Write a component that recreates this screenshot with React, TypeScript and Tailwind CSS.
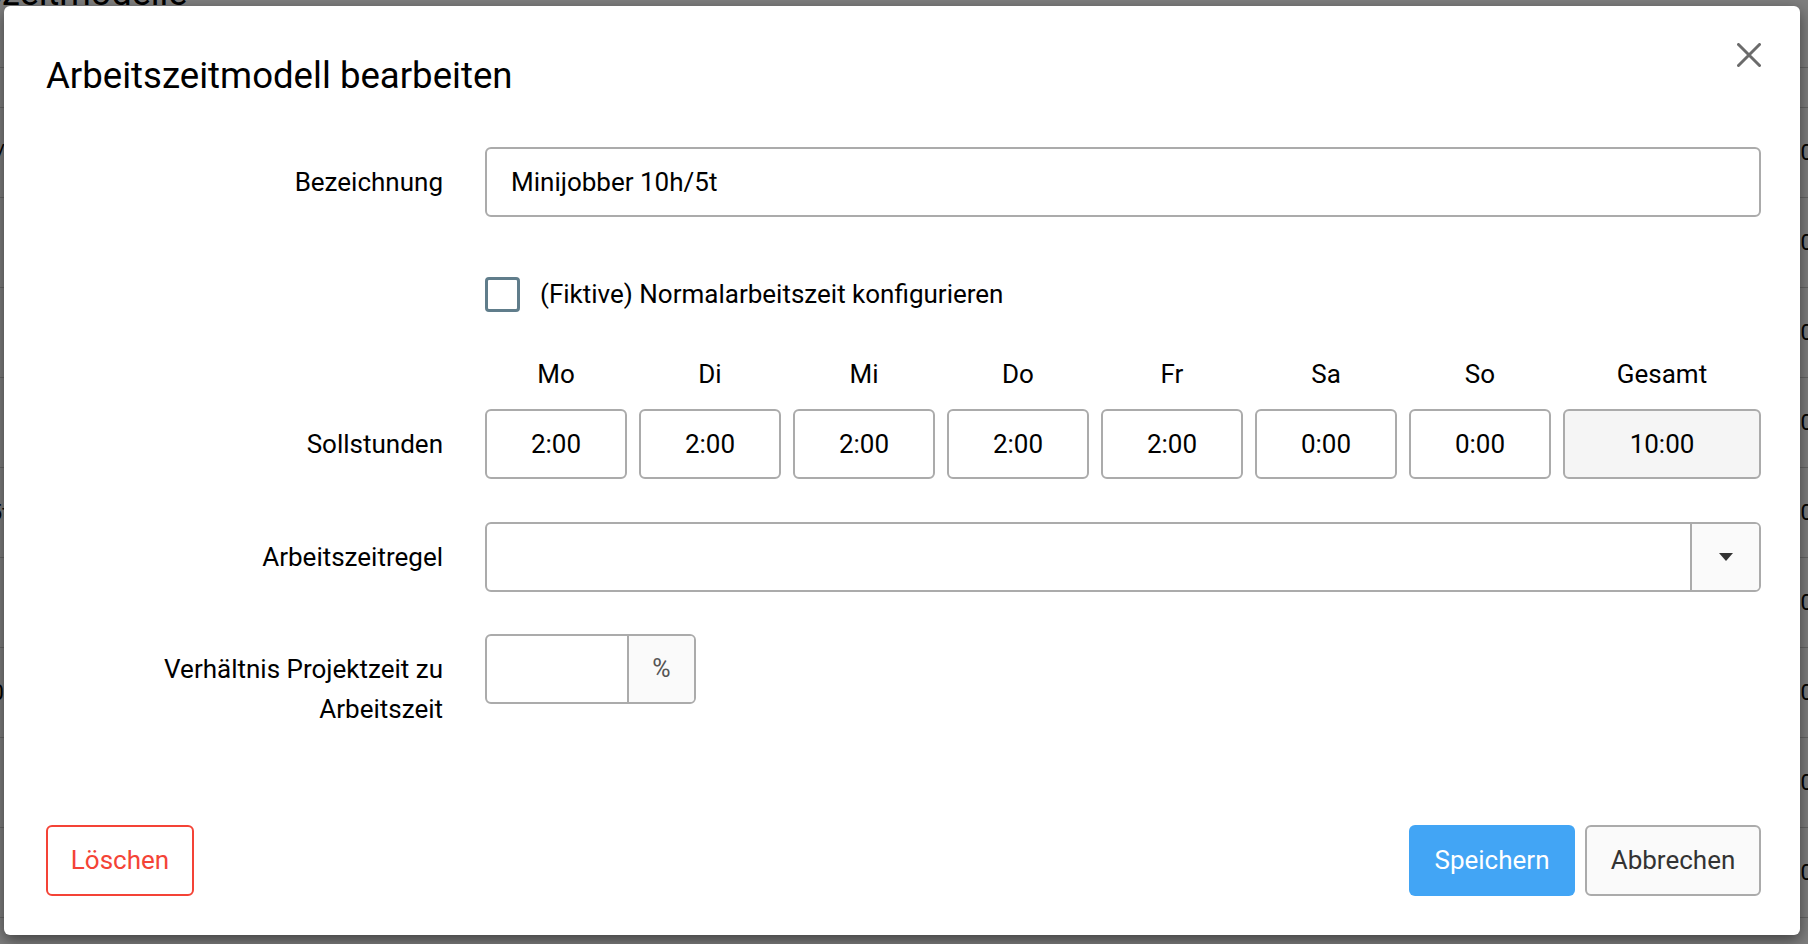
import React from 'react';

type Day = { label: string; value: string };

const days: Day[] = [
  { label: 'Mo', value: '2:00' },
  { label: 'Di', value: '2:00' },
  { label: 'Mi', value: '2:00' },
  { label: 'Do', value: '2:00' },
  { label: 'Fr', value: '2:00' },
  { label: 'Sa', value: '0:00' },
  { label: 'So', value: '0:00' },
];

// rows of the list page that sits behind the dialog
const pageRows = ['Minijobber 10h/5t', 'Vollzeit 40h/5t', 'Teilzeit 20h/5t', 'Teilzeit 30h/4t', 'Vollzeit 38,5h/5t', 'Teilzeit 25h/5t', 'Werkstudent 20h', 'Teilzeit 32h/4t', 'Aushilfe 8h/2t'];

const boxCls = 'h-[70px] w-full rounded-[6px] border-2 border-[#ababab] text-[26px] text-black outline-none';

const Row: React.FC<{ label?: React.ReactNode; className?: string; labelClassName?: string; children: React.ReactNode }> = ({
  label,
  className = '',
  labelClassName = '',
  children,
}) => (
  <div className={`grid grid-cols-[397px_1fr] gap-x-[42px] ${className}`}>
    <div className={`text-right text-[26px] leading-[39px] text-black ${labelClassName}`}>{label}</div>
    <div>{children}</div>
  </div>
);

const BackgroundPage: React.FC = () => (
  <div className="absolute inset-0 overflow-hidden bg-white">
    <h1 className="-ml-[112px] -mt-[29px] text-[36px] leading-[44px] text-black">Arbeitszeitmodelle</h1>
    <div className="mt-[52px] border-t border-[#cfcfcf]">
      <div className="flex h-[40px] items-center border-b border-[#cfcfcf] text-[20px] font-bold">
        <span className="-ml-[60px]">Name</span>
      </div>
      {pageRows.map((r) => (
        <div key={r} className="flex h-[90px] items-center border-b border-[#cfcfcf] text-[22px] text-black">
          <span className="-ml-[150px]">{r}</span>
          <span className="-mr-[35px] ml-auto">10:00</span>
        </div>
      ))}
    </div>
  </div>
);

export default function App() {
  return (
    <div className="relative h-[944px] w-full overflow-hidden font-['Roboto',sans-serif]">
      <BackgroundPage />
      <div className="absolute inset-0 bg-black/50" />

      <div className="absolute left-[4px] top-[6px] flex h-[929px] w-[1796px] flex-col rounded-[6px] bg-white pb-[39px] pl-[42px] pr-[39px] shadow-[0_5px_15px_rgba(0,0,0,0.5)]">
        {/* header */}
        <div className="flex items-start justify-between pt-[48px]">
          <h2 className="text-[36.6px] font-normal leading-[44px] text-black">Arbeitszeitmodell bearbeiten</h2>
          <button className="-mt-[11px] flex h-[24px] w-[24px] items-center justify-center">
            <svg width="24" height="24" viewBox="0 0 24 24">
              <path d="M1.5 1.5L22.5 22.5M22.5 1.5L1.5 22.5" stroke="#6b6b6b" strokeWidth="3" strokeLinecap="round" />
            </svg>
          </button>
        </div>

        {/* Bezeichnung */}
        <Row label="Bezeichnung" className="mt-[49px] items-center">
          <input className={`${boxCls} bg-white px-[24px]`} defaultValue="Minijobber 10h/5t" readOnly />
        </Row>

        {/* checkbox */}
        <Row className="mt-[42px] h-[70px] items-center">
          <label className="flex items-center gap-[20px] text-[26px] leading-[39px] text-black">
            <span className="h-[35px] w-[35px] rounded-[4px] border-[3px] border-[#607d8b]" />
            (Fiktive) Normalarbeitszeit konfigurieren
          </label>
        </Row>

        {/* day headers */}
        <Row className="mt-[26px]">
          <div className="grid grid-cols-[repeat(7,minmax(0,1fr))_198px] gap-x-[12px] text-center text-[26px] leading-[39px] text-black">
            {days.map((d) => (
              <div key={d.label}>{d.label}</div>
            ))}
            <div>Gesamt</div>
          </div>
        </Row>

        {/* Sollstunden */}
        <Row label="Sollstunden" className="mt-[15px] items-center">
          <div className="grid grid-cols-[repeat(7,minmax(0,1fr))_198px] gap-x-[12px]">
            {days.map((d) => (
              <input key={d.label} className={`${boxCls} bg-white text-center`} defaultValue={d.value} readOnly />
            ))}
            <input className={`${boxCls} bg-[#f5f5f5] text-center`} defaultValue="10:00" readOnly />
          </div>
        </Row>

        {/* Arbeitszeitregel */}
        <Row label="Arbeitszeitregel" className="mt-[43px] items-center">
          <div className="flex h-[70px] overflow-hidden rounded-[6px] border-2 border-[#ababab] bg-white">
            <div className="flex-1" />
            <div className="flex w-[69px] items-center justify-center border-l-2 border-[#ababab] bg-[#fafafa]">
              <svg width="14" height="8" viewBox="0 0 14 8">
                <path d="M0 0H14L7 8Z" fill="#333" />
              </svg>
            </div>
          </div>
        </Row>

        {/* Verhältnis */}
        <Row
          label={
            <>
              Verhältnis Projektzeit zu
              <br />
              Arbeitszeit
            </>
          }
          labelClassName="pt-[15px] leading-[40px]"
          className="mt-[42px] items-start"
        >
          <div className="flex h-[70px] w-[211px] overflow-hidden rounded-[6px] border-2 border-[#ababab] bg-white">
            <input className="w-[140px] px-[16px] text-[26px] outline-none" readOnly />
            <div className="flex flex-1 items-center justify-center border-l-2 border-[#ababab] bg-[#fafafa] text-[25px] text-[#555]">
              %
            </div>
          </div>
        </Row>

        {/* footer */}
        <div className="mt-auto flex items-center justify-between">
          <button className="h-[71px] w-[148px] rounded-[6px] border-2 border-[#f44336] bg-white text-[26px] text-[#f44336]">
            Löschen
          </button>
          <div className="flex gap-[10px]">
            <button className="h-[71px] w-[166px] rounded-[6px] bg-[#42a5f5] text-[26px] text-white">Speichern</button>
            <button className="h-[71px] w-[176px] rounded-[6px] border-2 border-[#ababab] bg-[#fafafa] text-[26px] text-[#333]">
              Abbrechen
            </button>
          </div>
        </div>
      </div>
    </div>
  );
}
